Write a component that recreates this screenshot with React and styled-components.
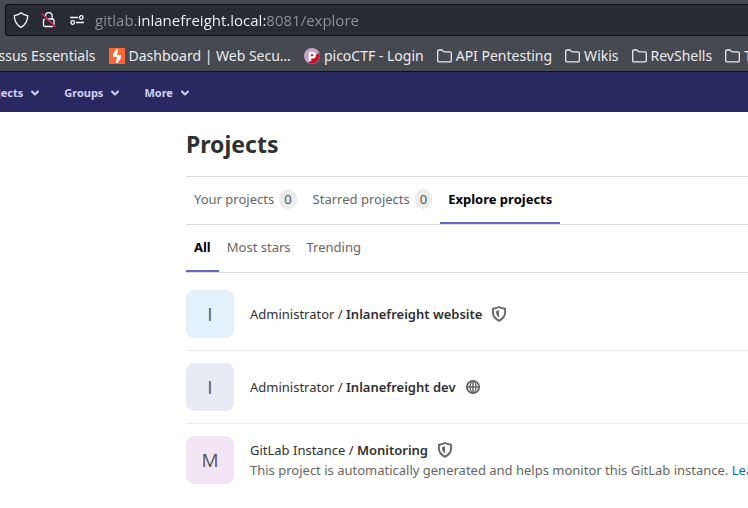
import React from "react";
import styled, { createGlobalStyle } from "styled-components";

const GlobalStyle = createGlobalStyle`
  *, *::before, *::after { box-sizing: border-box; }
  html, body { margin: 0; }
  body {
    background: #fff;
    color: #303030;
    font-family: "Noto Sans", sans-serif;
    font-size: 13px;
    line-height: 20px;
    overflow: hidden;
  }
  a { color: inherit; text-decoration: none; }
  button { border: 0; background: none; padding: 0; font: inherit; color: inherit; cursor: pointer; }
  svg { display: block; flex: none; }
`;

const Page = styled.div`
  min-height: 100vh;
  overflow: hidden;
`;

const BrowserChrome = styled.header`
  background: #46494f;
  border-bottom: 1px solid #101114;
  padding-top: 4px;
`;

const AddressBar = styled.div`
  display: flex;
  align-items: center;
  height: 32px;
  margin-left: 5px;
  padding-left: 7px;
  gap: 12px;
  background: #282a36;
  border: 1px solid #0c0c0d;
  border-right: 0;
  border-radius: 4px 0 0 4px;
`;

const UrlInput = styled.input`
  flex: 1;
  min-width: 0;
  border: 0;
  padding: 0;
  outline: 0;
  font-family: "Open Sans", "Noto Sans", sans-serif;
  font-size: 15px;
  height: 24px;
  margin-left: -2px;
  color: transparent;
  background: linear-gradient(90deg, #929399 43px, #fbfbfe 43px, #fbfbfe 171px, #929399 171px);
  background-clip: text;
`;

const BookmarkBar = styled.nav`
  display: flex;
  align-items: center;
  gap: 13px;
  height: 35px;
  padding-top: 4px;
  margin-left: -20px;
  color: #ececee;
  font-size: 14px;
`;

const Bookmark = styled.a`
  display: flex;
  align-items: center;
  gap: 4px;
  flex: none;
  white-space: nowrap;
`;

const SiteNav = styled.nav`
  display: flex;
  align-items: center;
  gap: 23px;
  height: 40px;
  margin-left: -21px;
  padding-top: 2px;
`;

const NavArea = styled.div`
  background: #292961;
  overflow: hidden;
`;

const NavButton = styled.button`
  display: flex;
  align-items: center;
  gap: 6px;
  color: #d1d1f0;
  font-size: 11px;
  font-weight: 700;
`;

const Main = styled.main`
  margin-left: 186px;
`;

const Title = styled.h1`
  margin: 0;
  height: 65px;
  padding-top: 16px;
  border-bottom: 1px solid #dbdbdb;
  font-size: 23px;
  line-height: 32px;
  font-weight: 700;
`;

const Tabs = styled.nav`
  display: flex;
  height: 48px;
  border-bottom: 1px solid #dbdbdb;
`;

const Tab = styled.a`
  display: flex;
  align-items: center;
  gap: 5px;
  padding: 0 8px 2px;
  border-bottom: 2px solid ${(p) => (p.$active ? "#6666c4" : "transparent")};
  color: ${(p) => (p.$active ? "#000" : "#666")};
  font-weight: ${(p) => (p.$active ? 700 : 400)};
  white-space: nowrap;
`;

const Count = styled.span`
  padding: 0 5px;
  border-radius: 10px;
  background: #ececec;
  color: #525252;
`;

const ProjectList = styled.ul`
  margin: 0;
  padding: 5px 0 0;
  list-style: none;
`;

const ProjectRow = styled.li`
  display: flex;
  align-items: center;
  gap: 16px;
  padding: 12px 0;
  border-bottom: 1px solid #ececec;
  &:last-child { border-bottom: 0; }
`;

const Avatar = styled.a`
  display: flex;
  align-items: center;
  justify-content: center;
  flex: none;
  width: 48px;
  height: 48px;
  border: 1px solid #ececee;
  border-radius: 8px;
  background: ${(p) => p.$tint};
  color: #555;
  font-family: "Open Sans", "Noto Sans", sans-serif;
  font-size: 19px;
`;

const ProjectName = styled.h2`
  display: flex;
  align-items: center;
  gap: 9px;
  margin: 0;
  color: #303030;
  font-size: 13px;
  font-weight: 400;
  white-space: nowrap;
  strong { font-weight: 600; }
`;

const Description = styled.p`
  margin: 0;
  color: #666;
  white-space: nowrap;
  a { color: #1068bf; }
`;

const ShieldOutline = () => (
  <svg width="16" height="18" viewBox="0 0 16 18" fill="none" stroke="#fbfbfe" strokeWidth="1.3">
    <path d="M8 1.700C6.200 3.400 4.200 4.200 1.300 4.600c0 5.400 1.900 9.200 6.700 11.700 4.800-2.500 6.700-6.300 6.700-11.700C11.800 4.200 9.800 3.400 8 1.700Z" strokeLinejoin="round" />
  </svg>
);

const LockOff = () => (
  <svg width="16" height="18" viewBox="0 0 16 18" fill="none" stroke="#fbfbfe" strokeWidth="1.3">
    <rect x="2.500" y="8" width="10.500" height="7.500" rx="1.500" />
    <path d="M4.500 8V5a3.300 3.300 0 0 1 6.600 0v3" />
    <path d="M1 4 14 16" stroke="#282a36" strokeWidth="2" />
    <path d="M1 2.500 14.500 16" stroke="#e22850" strokeWidth="1.500" />
  </svg>
);

const Permissions = () => (
  <svg width="16" height="12" viewBox="0 0 16 12" fill="none" stroke="#fbfbfe" strokeWidth="1.300">
    <path d="M1 3.500h8M7 8.500h8" />
    <circle cx="12.300" cy="3.500" r="1.800" />
    <circle cx="3.700" cy="8.500" r="1.800" />
  </svg>
);

const BurpIcon = () => (
  <svg width="16" height="16" viewBox="0 0 16 16">
    <path fill="#ff6633" d="M0 0h16v16H0z" />
    <path fill="#fff" d="M7.300 1H9v3.300L7.500 7H12v2.800L8.700 15H7.200v-3.300L8.600 9H4V6.200z" />
  </svg>
);

const PicoIcon = () => (
  <svg width="16" height="16" viewBox="0 0 16 16">
    <circle cx="8" cy="8" r="8" fill="#c9a0cb" />
    <path fill="#c8102e" d="M15.300 5A8 8 0 0 1 5 15.200L6 11l6-4z" />
    <path fill="none" stroke="#fff" strokeWidth="2.400" d="M6 13V5H8.500a2.200 2.200 0 0 1 0 4.400H6" />
    <circle cx="8" cy="7.200" r="1.100" fill="#c8102e" />
  </svg>
);

const Folder = () => (
  <svg width="15" height="14" viewBox="0 0 15 14" fill="none" stroke="#ececee" strokeWidth="1.300">
    <path d="M.7 2.200Q.7 1 1.900 1h3l2 1.900h6.200q1.200 0 1.200 1.200v7.600q0 1.200-1.200 1.200H1.900Q.7 12.900.7 11.700Z" strokeLinejoin="round" />
  </svg>
);

const Chevron = () => (
  <svg width="12" height="12" viewBox="0 0 12 12" fill="none" stroke="#d1d1f0" strokeWidth="2" strokeLinecap="round" strokeLinejoin="round">
    <path d="M3 4.500 6 7.500 9 4.500" />
  </svg>
);

const InternalShield = () => (
  <svg width="16" height="16" viewBox="0 0 16 16" role="img" aria-label="Internal">
    <path fill="none" stroke="#666" strokeWidth="1.900" strokeLinejoin="round" d="M1.900 2.700C4.200 2.500 6 1.900 8 1c2 .9 3.800 1.500 6.100 1.700v3.800c0 3.600-2.200 6.200-6.100 8.300-3.900-2.100-6.100-4.700-6.100-8.300Z" />
    <path fill="#666" d="M8 4v7.500C6 10 5 8.400 5 5.200 6.200 5 7.200 4.600 8 4Z" />
  </svg>
);

const Globe = () => (
  <svg width="16" height="16" viewBox="0 0 16 16" fill="none" stroke="#666" strokeWidth="1.900" role="img" aria-label="Public">
    <circle cx="8" cy="8" r="6.100" />
    <ellipse cx="8" cy="8" rx="2.900" ry="6.100" strokeWidth="1.400" />
    <path d="M1.500 8h13M8 1.500v13" strokeWidth="1.500" />
  </svg>
);

const bookmarks = [
  { label: "Nessus Essentials" },
  { label: "Dashboard | Web Secu…", Icon: BurpIcon },
  { label: "picoCTF - Login", Icon: PicoIcon },
  { label: "API Pentesting", Icon: Folder },
  { label: "Wikis", Icon: Folder },
  { label: "RevShells", Icon: Folder },
  { label: "Tools", Icon: Folder },
];

const projects = [
  { initial: "I", tint: "#e3f2fd", owner: "Administrator", name: "Inlanefreight website", Icon: InternalShield },
  { initial: "I", tint: "#e8eaf6", owner: "Administrator", name: "Inlanefreight dev", Icon: Globe },
  {
    initial: "M", tint: "#f3e5f5", owner: "GitLab Instance", name: "Monitoring", Icon: InternalShield,
    description: "This project is automatically generated and helps monitor this GitLab instance.",
  },
];

export default function App() {
  return (
    <Page>
      <GlobalStyle />
      <BrowserChrome>
        <AddressBar>
          <ShieldOutline />
          <LockOff />
          <Permissions />
          <UrlInput aria-label="Address" defaultValue="gitlab.inlanefreight.local:8081/explore" />
        </AddressBar>
        <BookmarkBar aria-label="Bookmarks">
          {bookmarks.map(({ label, Icon }) => (
            <Bookmark href="#" key={label}>
              {Icon && <Icon />}
              {label}
            </Bookmark>
          ))}
        </BookmarkBar>
      </BrowserChrome>
      <NavArea>
        <SiteNav aria-label="Site">
          {["Projects", "Groups", "More"].map((label) => (
            <NavButton key={label}>{label}<Chevron /></NavButton>
          ))}
        </SiteNav>
      </NavArea>
      <Main>
        <Title>Projects</Title>
        <Tabs aria-label="Project views">
          <Tab href="#">Your projects <Count>0</Count></Tab>
          <Tab href="#">Starred projects <Count>0</Count></Tab>
          <Tab href="#" $active aria-current="page">Explore projects</Tab>
        </Tabs>
        <Tabs aria-label="Project filters">
          <Tab href="#" $active aria-current="page">All</Tab>
          <Tab href="#">Most stars</Tab>
          <Tab href="#">Trending</Tab>
        </Tabs>
        <ProjectList>
          {projects.map(({ initial, tint, owner, name, Icon, description }) => (
            <ProjectRow key={name}>
              <Avatar href="#" $tint={tint} aria-label={name}>{initial}</Avatar>
              <div>
                <ProjectName>
                  <a href="#">{owner} / <strong>{name}</strong></a>
                  <Icon />
                </ProjectName>
                {description && <Description>{description} <a href="#">Learn more.</a></Description>}
              </div>
            </ProjectRow>
          ))}
        </ProjectList>
      </Main>
    </Page>
  );
}
